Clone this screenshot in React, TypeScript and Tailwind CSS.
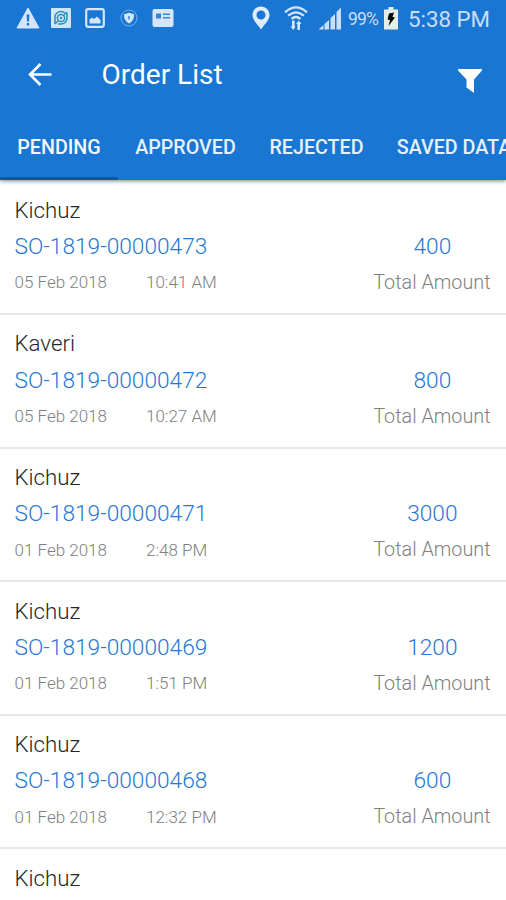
import React, { useState } from 'react';

interface Order {
  customer: string;
  orderNo?: string;
  date?: string;
  time?: string;
  amount?: number;
}

const TABS = [
  { label: 'PENDING', width: 'w-[118px]' },
  { label: 'APPROVED', width: 'w-[135px]' },
  { label: 'REJECTED', width: 'w-[127px]' },
  { label: 'SAVED DATA', width: 'w-[148px]' },
];

const ORDERS: Order[] = [
  { customer: 'Kichuz', orderNo: 'SO-1819-00000473', date: '05 Feb 2018', time: '10:41 AM', amount: 400 },
  { customer: 'Kaveri', orderNo: 'SO-1819-00000472', date: '05 Feb 2018', time: '10:27 AM', amount: 800 },
  { customer: 'Kichuz', orderNo: 'SO-1819-00000471', date: '01 Feb 2018', time: '2:48 PM', amount: 3000 },
  { customer: 'Kichuz', orderNo: 'SO-1819-00000469', date: '01 Feb 2018', time: '1:51 PM', amount: 1200 },
  { customer: 'Kichuz', orderNo: 'SO-1819-00000468', date: '01 Feb 2018', time: '12:32 PM', amount: 600 },
  { customer: 'Kichuz' },
];

const NotificationIcons = () => (
  <div className="flex items-center">
    <svg width="24" height="22" viewBox="0 0 24 22">
      <path d="M12 1 L23 21 H1 Z" fill="#d6e6fa" stroke="#d6e6fa" strokeLinejoin="round" />
      <path d="M10.6 7.5 H13.4 L13 14.5 H11 Z M10.8 16 H13.2 V18.5 H10.8 Z" fill="#1976d2" />
    </svg>
    <svg width="20" height="20" viewBox="0 0 20 20" className="ml-[11px]">
      <rect width="20" height="20" rx="1" fill="#cfe6f5" />
      <path d="M4 16 V9 A6 6 0 0 1 14 5 M16 5 V10 A6 6 0 0 1 10 16 H7" fill="none" stroke="#2a8fb5" strokeWidth="1.500" />
      <circle cx="10" cy="10" r="3.600" fill="none" stroke="#2a8fb5" strokeWidth="1.500" />
      <circle cx="10" cy="10" r="1.200" fill="#2a8fb5" />
      <path d="M4 16 L7.500 12.500 M12.500 7.500 L16 4" stroke="#2a8fb5" strokeWidth="1.200" />
    </svg>
    <svg width="20" height="20" viewBox="0 0 20 20" className="ml-[14px]">
      <rect x="1.200" y="1.200" width="17.600" height="17.600" rx="2" fill="none" stroke="#d6e6fa" strokeWidth="2.200" />
      <path d="M4.500 15.500 V11.500 L7 9.500 L9 11 L12 8.500 L15.500 12 V15.500 Z" fill="#d6e6fa" />
    </svg>
    <svg width="18" height="18" viewBox="0 0 18 18" className="ml-[15px]">
      <circle cx="9" cy="9" r="8" fill="none" stroke="#76aee9" strokeWidth="1" />
      <path d="M9 3.800 L14 5.300 C14 10 12.500 12.600 9 14.500 C5.500 12.600 4 10 4 5.300 Z" fill="#d6e6fa" />
      <path d="M8 7 H10 V10.500 H8 Z" fill="#5d9de0" />
    </svg>
    <svg width="22" height="18" viewBox="0 0 22 18" className="ml-[14px]">
      <rect x="0.500" width="21" height="18" rx="2" fill="#d6e6fa" />
      <path d="M4 4.500 H9 V9.500 H4 Z M11 4.500 H18 V6 H11 Z M11 8 H18 V9.500 H11 Z" fill="#3c82d2" />
    </svg>
  </div>
);

const SystemIcons = () => (
  <div className="flex items-center text-[#c9def8]">
    <svg width="18" height="24" viewBox="0 0 18 24">
      <path d="M9 0.500 C4 0.500 0.500 4.200 0.500 9 C0.500 14 5 18 9 23.500 C13 18 17.500 14 17.500 9 C17.500 4.200 14 0.500 9 0.500 Z M9 4.500 A4.500 4.500 0 1 1 9 13.500 A4.500 4.500 0 1 1 9 4.500 Z" fill="#e0ecfb" fillRule="evenodd" />
    </svg>
    <svg width="24" height="25" viewBox="0 0 24 25" className="ml-[14px]">
      <path d="M1 6.300 Q12 -3.500 23 6.300 M4.200 9.700 Q12 3 19.800 9.700 M7.500 12.800 Q12 9.200 16.500 12.800" fill="none" stroke="#d6e6fa" strokeWidth="2.300" />
      <path d="M8 14.500 H10.600 V20.500 H11.600 L9.200 24 L6.500 20.500 H8 Z M13.400 24 V18 H12 L14.700 14.500 L17.500 18 H16 V24 Z" fill="#d6e6fa" />
    </svg>
    <svg width="24" height="23" viewBox="0 0 24 23" className="ml-[10px]">
      <path d="M0.500 22.500 L5.500 18 V22.500 Z M6.500 17 L11 13 V22.500 H6.500 Z M12.500 11 L17 7 V22.500 H12.500 Z M18.500 5 L23 0.500 V22.500 H18.500 Z" fill="#c9def8" />
    </svg>
    <span className="ml-[6px] mt-px w-[32px] whitespace-nowrap text-[17.5px] leading-[24px] tracking-[-0.8px]">99%</span>
    <svg width="14" height="23" viewBox="0 0 14 23" className="ml-[4px]">
      <path d="M4.500 0 H9.500 V2.500 H14 V22.500 H0 V2.500 H4.500 Z" fill="#e3f0e8" />
      <path d="M5 6.500 L10 5.500 L8.500 10 L11 10.500 L4.500 19 L6 13 L3.500 12.500 Z" fill="#050505" />
    </svg>
    <span className="ml-[10px] mt-[2px] w-[84px] whitespace-nowrap text-[22.3px] leading-[24px]">5:38 PM</span>
  </div>
);

const OrderRow: React.FC<{ order: Order }> = ({ order }) => (
  <div className="flex h-[133.6px] shrink-0 justify-between border-b-2 border-[#e8e8e8] pl-[14.5px] pr-[15.5px] pt-[16.300px] font-light">
    <div>
      <div className="text-[22.3px] leading-[24px] text-[#262626]">{order.customer}</div>
      {order.orderNo && (
        <>
          <div className="mt-[13.200px] text-[22.7px] leading-[24px] text-[#2877d4]">{order.orderNo}</div>
          <div className="mt-[11.500px] flex text-[17px] leading-[24px] text-[#808080]">
            <span className="w-[131.500px]">{order.date}</span>
            <span>{order.time}</span>
          </div>
        </>
      )}
    </div>
    {order.amount !== undefined && (
      <div className="pt-[37.200px] text-center">
        <div className="pl-px text-[22.7px] leading-[24px] text-[#2877d4]">{order.amount}</div>
        <div className="mt-[12px] text-[19.8px] leading-[24px] text-[#808080]">Total Amount</div>
      </div>
    )}
  </div>
);

const App: React.FC = () => {
  const [activeTab, setActiveTab] = useState('PENDING');

  return (
    <div className="flex h-[900px] w-[506px] flex-col overflow-hidden bg-white font-[Roboto,sans-serif]">
      <header className="z-10 flex h-[180px] shrink-0 flex-col bg-[#1976d2] shadow-[0_1px_4px_rgba(0,0,0,0.5)]">
        {/* Status bar */}
        <div className="flex h-[36px] items-center justify-between pl-[16px] pr-[14px]">
          <NotificationIcons />
          <SystemIcons />
        </div>

        {/* Toolbar */}
        <div className="flex h-[78px] items-center text-white">
          <button className="ml-[27.500px]">
            <svg width="24" height="24" viewBox="0 0 24 24">
              <path d="M23.500 11.500 H3 M12.500 1 L2 11.500 L12.500 22" fill="none" stroke="white" strokeWidth="2.600" />
            </svg>
          </button>
          <h1 className="ml-[50px] text-[28px] leading-[32px]">Order List</h1>
          <button className="ml-auto mr-[23px] mt-[12px]">
            <svg width="26" height="26" viewBox="0 0 26 26">
              <path d="M1 1 H25 V2.500 L17 11.500 V25 L9.500 19.500 V11.500 L1 2.500 Z" fill="white" />
            </svg>
          </button>
        </div>

        {/* Tabs */}
        <nav className="flex flex-1 overflow-hidden">
          {TABS.map((tab) => (
            <button
              key={tab.label}
              onClick={() => setActiveTab(tab.label)}
              className={`${tab.width} flex shrink-0 items-center justify-center whitespace-nowrap border-b-3 pt-[5px] text-[19.7px] font-medium
                ${activeTab === tab.label ? 'border-[#17578f] text-[#f2f8fe]' : 'border-transparent text-[#e6f1fc]'}
              `}
            >
              {tab.label}
            </button>
          ))}
        </nav>
      </header>

      <main className="flex flex-1 flex-col overflow-hidden pt-[1.500px]">
        {ORDERS.map((order, index) => (
          <OrderRow key={index} order={order} />
        ))}
      </main>
    </div>
  );
};

export default App;
